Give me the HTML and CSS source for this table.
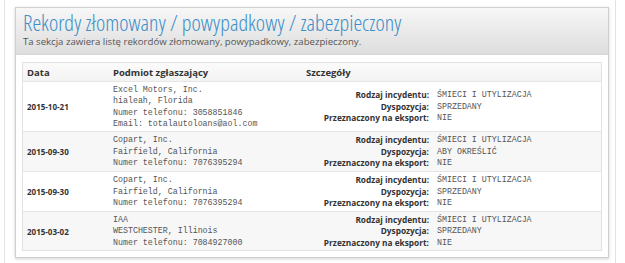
FILE: index.html
```html
<!DOCTYPE html>
<html lang="pl">
<head>
<meta charset="utf-8">
<title>Rekordy</title>
<link rel="stylesheet" href="styles.css">
</head>
<body>
<div class="page">
  <section class="panel">
    <header class="panel-head">
      <h1 class="title">Rekordy złomowany / powypadkowy / zabezpieczony</h1>
      <p class="subtitle">Ta sekcja zawiera listę rekordów złomowany, powypadkowy, zabezpieczony.</p>
    </header>
    <div class="panel-body">
      <div class="records">
        <div class="row head">
          <div class="cell">Data</div>
          <div class="cell">Podmiot zgłaszający</div>
          <div class="cell">Szczegóły</div>
        </div>
        <div class="row">
          <div class="cell date">2015-10-21</div>
          <div class="cell mono">Excel Motors, Inc.<br>hialeah, Florida<br>Numer telefonu: 3058851846<br>Email: totalautoloans@aol.com</div>
          <div class="cell details">
            <span class="lbl">Rodzaj incydentu:</span><span class="val">ŚMIECI I UTYLIZACJA</span>
            <span class="lbl">Dyspozycja:</span><span class="val">SPRZEDANY</span>
            <span class="lbl">Przeznaczony na eksport:</span><span class="val">NIE</span>
          </div>
        </div>
        <div class="row alt">
          <div class="cell date">2015-09-30</div>
          <div class="cell mono">Copart, Inc.<br>Fairfield, California<br>Numer telefonu: 7076395294</div>
          <div class="cell details">
            <span class="lbl">Rodzaj incydentu:</span><span class="val">ŚMIECI I UTYLIZACJA</span>
            <span class="lbl">Dyspozycja:</span><span class="val">ABY OKREŚLIĆ</span>
            <span class="lbl">Przeznaczony na eksport:</span><span class="val">NIE</span>
          </div>
        </div>
        <div class="row">
          <div class="cell date">2015-09-30</div>
          <div class="cell mono">Copart, Inc.<br>Fairfield, California<br>Numer telefonu: 7076395294</div>
          <div class="cell details">
            <span class="lbl">Rodzaj incydentu:</span><span class="val">ŚMIECI I UTYLIZACJA</span>
            <span class="lbl">Dyspozycja:</span><span class="val">SPRZEDANY</span>
            <span class="lbl">Przeznaczony na eksport:</span><span class="val">NIE</span>
          </div>
        </div>
        <div class="row alt last">
          <div class="cell date">2015-03-02</div>
          <div class="cell mono">IAA<br>WESTCHESTER, Illinois<br>Numer telefonu: 7084927000</div>
          <div class="cell details">
            <span class="lbl">Rodzaj incydentu:</span><span class="val">ŚMIECI I UTYLIZACJA</span>
            <span class="lbl">Dyspozycja:</span><span class="val">SPRZEDANY</span>
            <span class="lbl">Przeznaczony na eksport:</span><span class="val">NIE</span>
          </div>
        </div>
      </div>
    </div>
  </section>
</div>
</body>
</html>
```

FILE: styles.css
```css
html, body {
  margin: 0;
  padding: 0;
  background: #ffffff;
}
body {
  font-family: "Open Sans", "DejaVu Sans", sans-serif;
  color: #333;
}
.page {
  margin: 0 9px 0 4px;
  height: 263px;
  box-sizing: border-box;
  border-left: 1px solid #e3e3e3;
  border-right: 1px solid #e3e3e3;
  padding: 7px 6px 0 10px;
}
.panel {
  border: 1px solid #cfcfcf;
  background: #fff;
  box-shadow: 0 1px 3px rgba(0, 0, 0, 0.18);
}
.panel-head {
  background: linear-gradient(#f7f7f7, #dddddd);
  padding: 1px 7px 0;
  height: 45px;
  border-bottom: 1px solid #d6d6d6;
}
.title {
  margin: 0;
  font-family: "Open Sans", "DejaVu Sans Condensed", sans-serif;
  font-stretch: 75%;
  font-weight: 300;
  font-size: 22.1px;
  line-height: 26px;
  color: #3b8ec8;
  white-space: nowrap;
}
.subtitle {
  margin: 0;
  font-size: 9.6px;
  line-height: 13px;
  color: #555;
  white-space: nowrap;
}
.panel-body {
  padding: 7px 6px 6px 6px;
}
.records {
  border: 1px solid #e2e2e2;
}
.row {
  display: grid;
  grid-template-columns: 86px 193px 1fr;
  border-top: 1px solid #e6e6e6;
  background: #fff;
  box-sizing: border-box;
  min-height: 40px;
}
.row.alt {
  background: #f7f7f7;
}
.row.last {
  min-height: 39px;
}
.row.head {
  border-top: none;
  background: linear-gradient(#fbfbfb, #f3f3f3);
  min-height: 0;
  height: 18px;
  align-items: center;
}
.row.head .cell {
  font-weight: 700;
  font-size: 9.5px;
  color: #333;
  padding: 0 4px;
}
.cell {
  padding: 1.5px 4px;
  display: flex;
  flex-direction: column;
  justify-content: center;
}
.date {
  font-weight: 700;
  font-size: 8px;
  color: #333;
}
.mono {
  font-family: "Liberation Mono", "DejaVu Sans Mono", monospace;
  font-size: 8.3px;
  line-height: 11.5px;
  color: #555;
  display: block;
  align-self: center;
}
.details {
  display: grid;
  grid-template-columns: 123px 1fr;
  column-gap: 8px;
  align-content: center;
}
.lbl {
  text-align: right;
  font-weight: 700;
  font-size: 8.3px;
  line-height: 11.5px;
  color: #333;
}
.val {
  font-family: "Liberation Mono", "DejaVu Sans Mono", monospace;
  font-size: 8.3px;
  line-height: 11.5px;
  color: #555;
}
```
